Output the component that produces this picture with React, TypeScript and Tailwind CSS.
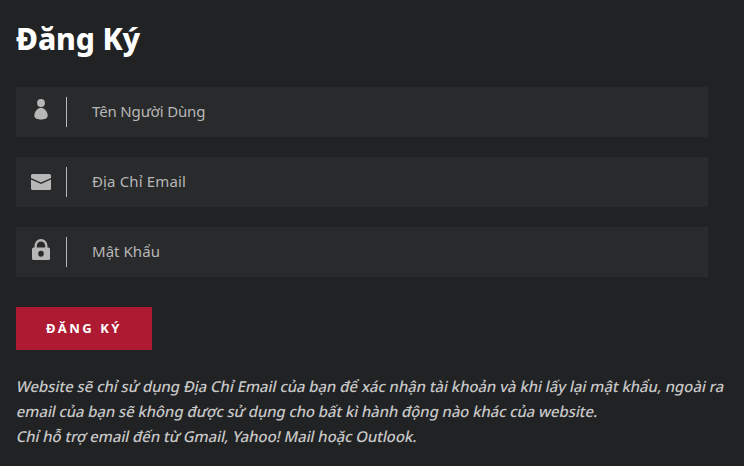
import type { ReactNode } from "react";

function UserIcon() {
  return (
    <svg width="14" height="21" viewBox="0 0 14 21" fill="currentColor">
      <circle cx="7" cy="4" r="3.900" />
      <path d="M7 8.800C3.400 8.800.3 13.300.3 16.500.3 19.700 3.900 20.500 7 20.500s6.700-.8 6.700-4C13.700 13.300 10.600 8.800 7 8.800Z" />
    </svg>
  );
}

function MailIcon() {
  return (
    <svg className="relative top-0.5" width="20" height="16" viewBox="0 0 20 16" fill="currentColor">
      <path d="M1.500 0h17A1.500 1.500 0 0 1 20 1.500v2.400L10 8.400 0 3.900V1.500A1.500 1.500 0 0 1 1.500 0Z" />
      <path d="M0 5.600 10 10l10-4.400v8.900a1.500 1.500 0 0 1-1.500 1.500h-17A1.500 1.500 0 0 1 0 14.500Z" />
    </svg>
  );
}

function LockIcon() {
  return (
    <svg width="18" height="21" viewBox="0 0 18 20" preserveAspectRatio="none" fill="currentColor" fillRule="evenodd">
      <path d="M2.500 8.200V6.500a6.500 6.500 0 0 1 13 0v1.700h1a1.500 1.500 0 0 1 1.500 1.500v8.800a1.500 1.500 0 0 1-1.500 1.500h-15A1.500 1.500 0 0 1 0 18.500V9.700a1.500 1.500 0 0 1 1.500-1.500ZM4.800 8.200h8.400V6.500a4.200 4.200 0 0 0-8.400 0ZM9 11.200a2.800 2.800 0 1 0 0 5.600 2.800 2.800 0 0 0 0-5.600Z" />
    </svg>
  );
}

function Field({ icon, children }: { icon: ReactNode; children: ReactNode }) {
  return (
    <label className="flex h-[50px] w-[692px] items-center bg-[#292a2c] text-[#b7b7b7]">
      <span className="flex w-[50px] justify-center pb-[5px]">{icon}</span>
      <span className="h-[30px] w-px bg-[#b7b7b7]" />
      <span className="ml-[25px] pb-0.5 whitespace-nowrap text-[15px] leading-5">{children}</span>
    </label>
  );
}

export default function App() {
  return (
    <main className="h-[466px] w-[744px] overflow-hidden bg-[#212224] px-4 pt-[19px] font-['Noto_Sans','Open_Sans',sans-serif]">
      <h1 className="h-[68px] whitespace-nowrap text-[30px] leading-10 font-extrabold tracking-[-0.1px] text-white">Đăng Ký</h1>
      <form className="flex flex-col gap-5">
        <Field icon={<UserIcon />}><span className="tracking-[-0.15px]">Tên Người Dùng</span></Field>
        <Field icon={<MailIcon />}><span className="tracking-[0.15px]">Địa Chỉ Email</span></Field>
        <Field icon={<LockIcon />}><span className="tracking-[0.05px]">Mật Khẩu</span></Field>
        <button type="button" className="mt-2.5 h-[43px] w-[136px] bg-[#ae1a32] text-[13px] font-bold tracking-[2.500px] text-white">
          ĐĂNG KÝ
        </button>
      </form>
      <p className="mt-6 pl-px whitespace-nowrap text-[15px] leading-[25px] font-medium text-[#c8c8c8]">
        <span className="block -skew-x-12 tracking-[-0.075px]">Website sẽ chỉ sử dụng Địa Chỉ Email của bạn để xác nhận tài khoản và khi lấy lại mật khẩu, ngoài ra</span>
        <span className="block -skew-x-12 tracking-[-0.115px]">email của bạn sẽ không được sử dụng cho bất kì hành động nào khác của website.</span>
        <span className="block -skew-x-12 tracking-[-0.1px]">Chỉ hỗ trợ email đến từ Gmail, Yahoo! Mail hoặc Outlook.</span>
      </p>
    </main>
  );
}
